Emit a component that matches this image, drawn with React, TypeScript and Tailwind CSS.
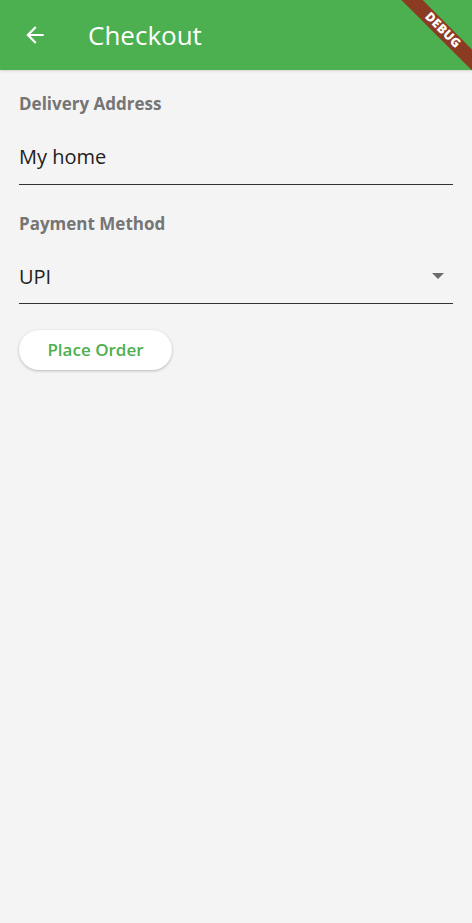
import React from 'react';

const font = { fontFamily: '"Open Sans", "Noto Sans", sans-serif' };

function DebugBanner() {
  return (
    <div className="pointer-events-none absolute right-0 top-0 h-[100px] w-[100px] overflow-hidden">
      <div className="absolute right-[-33px] top-[23px] flex h-[15px] w-[125px] rotate-45 items-center justify-center bg-[#8b3b22]">
        <span className="text-[12.5px] font-black leading-none tracking-[0.3px] text-white" style={font}>
          DEBUG
        </span>
      </div>
    </div>
  );
}

export default function App() {
  return (
    <div className="relative min-h-[923px] w-full bg-[#f4f4f4]" style={font}>
      <header className="flex h-[70px] items-center bg-[#4caf50] shadow-sm">
        <button className="ml-[20px] flex h-[30px] w-[30px] items-center justify-center text-white">
          <svg width="26" height="26" viewBox="0 0 24 24" fill="currentColor">
            <path d="M20 11H7.83l5.59-5.59L12 4l-8 8 8 8 1.41-1.41L7.83 13H20v-2z" />
          </svg>
        </button>
        <h1 className="ml-[38px] text-[26px] font-normal text-white">Checkout</h1>
      </header>

      <main className="flex flex-col px-[19px] pt-[22px]">
        <label className="text-[17px] font-bold leading-[24px] text-[#757575]">Delivery Address</label>
        <div className="mt-[27px] flex h-[42px] items-start border-b-[1.5px] border-[#333]">
          <span className="text-[20px] leading-[28px] text-[#212121]">My home</span>
        </div>

        <label className="mt-[27px] text-[17px] font-bold leading-[24px] text-[#757575]">Payment Method</label>
        <div className="mt-[27px] flex h-[41px] items-start justify-between border-b-[1.5px] border-[#333]">
          <span className="text-[20px] leading-[28px] text-[#212121]">UPI</span>
          <svg className="mr-[8px] mt-[9px]" width="14" height="8" viewBox="0 0 14 8" fill="#6b6b6b">
            <path d="M1 1h12L7 7z" />
          </svg>
        </div>

        <div className="mt-[26px]">
          <button className="flex h-[40px] w-[153px] items-center justify-center rounded-full bg-white text-[17px] font-semibold text-[#4caf50] shadow-[0_1px_3px_rgba(0,0,0,0.25)]">
            Place Order
          </button>
        </div>
      </main>

      <DebugBanner />
    </div>
  );
}
